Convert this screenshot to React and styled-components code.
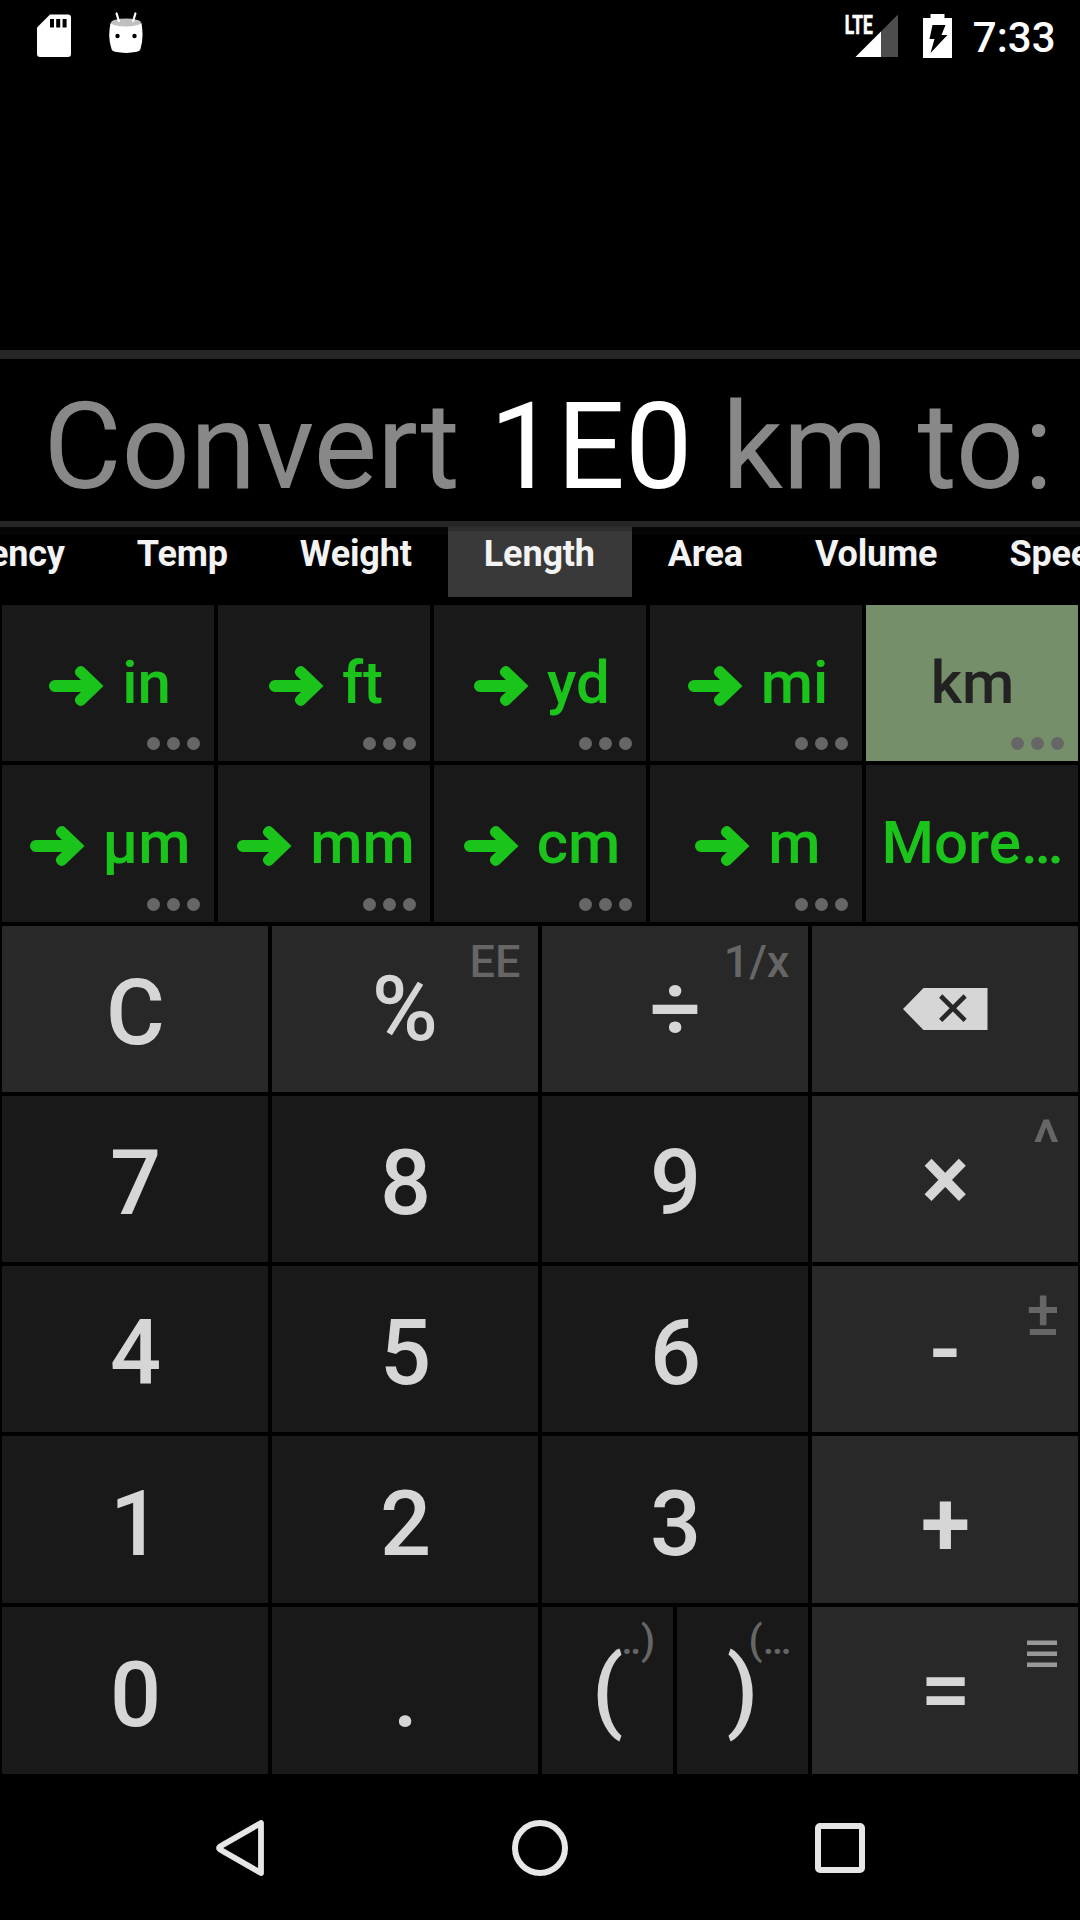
import React from "react";
import styled, { createGlobalStyle } from "styled-components";

const Global = createGlobalStyle`
  html, body { margin: 0; padding: 0; background: #000; }
  * { box-sizing: border-box; }
`;

const Screen = styled.div`
  width: 1080px;
  height: 1920px;
  background: #000;
  display: flex;
  flex-direction: column;
  overflow: hidden;
  font-family: Roboto, "Liberation Sans", sans-serif;
`;

const StatusBar = styled.header`
  height: 72px;
  flex: none;
  display: flex;
  justify-content: space-between;
  padding: 0 24.5px 0 37px;
`;

const StatusGroup = styled.div`
  display: flex;
  align-items: flex-start;
`;

const StatusIcon = styled.svg`
  display: block;
  flex: none;
  margin-right: ${(p) => p.$after || 0}px;
`;

const NetworkType = styled.text`
  font-size: 26px;
  font-weight: 700;
  fill: #fff;
  stroke: #fff;
  stroke-width: 0.7px;
`;

const Clock = styled.span`
  color: #fff;
  font-size: 42px;
  font-weight: 500;
  line-height: 75px;
`;

const History = styled.div`
  height: 278px;
  flex: none;
`;

const Display = styled.div`
  height: 177px;
  flex: none;
  border-top: 9px solid #262626;
  border-bottom: 6px solid #262626;
  padding: 18px 27px 0 0;
  text-align: right;
  white-space: pre;
  font-size: 120px;
  letter-spacing: -0.07px;
  line-height: 141px;
  color: #888;
`;

const Value = styled.span`
  color: #fff;
`;

const Tabs = styled.nav`
  height: 76px;
  flex: none;
  display: flex;
  justify-content: center;
  align-items: flex-start;
  padding-right: 50px;
  background: linear-gradient(#050505 8px, #000 8px);
`;

const Tab = styled.div`
  flex: none;
  height: 70px;
  min-width: ${(p) => (p.$active ? 184 : 0)}px;
  padding: 0 36px;
  font-size: 36px;
  line-height: 54px;
  font-weight: 700;
  letter-spacing: -0.15px;
  color: #f3f3f3;
  background: ${(p) => (p.$active ? "linear-gradient(#2f2f2f 4px, #393939 4px)" : "none")};
`;

const Row = styled.div`
  flex: none;
  height: ${(p) => p.$h}px;
  display: grid;
  grid-template-columns: repeat(${(p) => p.$cols}, 1fr);
`;

const Split = styled.div`
  display: grid;
  grid-template-columns: 1fr 1fr;
`;

const Cell = styled.div`
  position: relative;
  margin: 2px;
  display: flex;
  align-items: center;
  justify-content: center;
  white-space: pre;
  font-weight: 500;
`;

const UnitCell = styled(Cell)`
  padding: 0 0 ${(p) => p.$lift}px ${(p) => (p.$shift ? 4 : 1)}px;
  background: ${(p) => (p.$selected ? "#758f6b" : "#191919")};
  color: ${(p) => (p.$selected ? "#222" : "#1bc41b")};
  font-size: 60px;
  line-height: 70px;
`;

const UnitName = styled.span`
  margin-left: ${(p) => (p.$gap ? 18 : 0)}px;
`;

const Arrow = styled.svg`
  display: block;
  margin-top: 6px;
`;

const Dots = styled.div`
  position: absolute;
  right: 14px;
  bottom: 11px;
  display: flex;
  gap: 7px;
`;

const Dot = styled.i`
  width: 13px;
  height: 13px;
  border-radius: 50%;
  background: #666;
`;

const Key = styled(Cell)`
  background: ${(p) => (p.$op ? "#282828" : "#191919")};
  color: #d6d6d6;
  font-size: 90px;
  line-height: 106px;
`;

const KeyLabel = styled.span`
  position: relative;
  padding: ${(p) => (p.$drop === undefined ? 1 : p.$drop)}px 0 0 ${(p) => (p.$flush ? 0 : 1)}px;
  font-weight: ${(p) => p.$weight || 500};
`;

const Hint = styled.span`
  position: absolute;
  right: ${(p) => p.$right}px;
  top: ${(p) => p.$top || 9}px;
  font-size: ${(p) => p.$size || 45}px;
  line-height: 1.2;
  color: #666;
`;

const MenuHint = styled.svg`
  position: absolute;
  right: 21px;
  top: 33px;
`;

const NavBar = styled.footer`
  height: 144px;
  flex: none;
  display: flex;
  justify-content: center;
  align-items: center;
`;

const NavButton = styled.div`
  width: 300px;
  display: flex;
  justify-content: center;
`;

const tabs = ["Currency", "Temp", "Weight", "Length", "Area", "Volume", "Speed"];
const units = [
  ["in", "ft", "yd", "mi", "km"],
  ["µm", "mm", "cm", "m", "More…"],
];

function Unit({ name, lift }) {
  const selected = name === "km";
  const more = name === "More…";
  const arrow = !selected && !more;
  return (
    <UnitCell $selected={selected} $shift={arrow} $lift={lift}>
      {arrow && (
        <Arrow width="55" height="40" viewBox="0 0 55 40" fill="#1bc41b">
          <path d="M6 14H32L27.300 9.500A5.700 5.700 0 0 1 35.300 1.500L54.500 20L35.300 38.500A5.700 5.700 0 0 1 27.300 30.500L32 26H6A6 6 0 0 1 6 14Z" />
        </Arrow>
      )}
      <UnitName $gap={arrow}>{name}</UnitName>
      {!more && (
        <Dots>
          <Dot />
          <Dot />
          <Dot />
        </Dots>
      )}
    </UnitCell>
  );
}

function Digit({ children }) {
  return (
    <Key>
      <KeyLabel $drop={10}>{children}</KeyLabel>
    </Key>
  );
}

export default function App() {
  return (
    <Screen>
      <Global />
      <StatusBar>
        <StatusGroup>
          <StatusIcon $after={36} width="35" height="60" viewBox="0 0 35 60">
            <path fill="#fff" d="M13 14.500H31Q34 14.500 34 17.500V54Q34 57 31 57H3Q0 57 0 54V27.500Z" />
            <path fill="#000" d="M13 19h4v8.500h-4zM19.200 19h4v8.500h-4zM25.600 19h4v8.500h-4z" />
          </StatusIcon>
          <StatusIcon width="36" height="60" viewBox="0 0 36 60">
            <path fill="#fff" d="M2.500 23Q18 29 33.500 23Q36 38 32.500 49Q32 51 29 51.800Q18 54 7 51.800Q4 51 3.500 49Q-0.500 38 2.500 23Z" />
            <ellipse cx="18" cy="22.500" rx="15" ry="4" fill="#c0c0c0" />
            <path d="M8.600 13.500L10.800 21M27.400 13.500L25.200 21" stroke="#fff" strokeWidth="2.200" strokeLinecap="round" />
            <circle cx="9.500" cy="36" r="2.200" />
            <circle cx="26.500" cy="36" r="2.200" />
          </StatusIcon>
        </StatusGroup>
        <StatusGroup>
          <StatusIcon $after={24} width="54" height="60" viewBox="0 0 54 60">
            <path fill="#4d4d4d" d="M53 14.500V57H10.500Z" />
            <path fill="#fff" d="M36 31.500V57H10.500Z" />
            <NetworkType x="-0.300" y="33.700" textLength="28" lengthAdjust="spacingAndGlyphs">
              LTE
            </NetworkType>
          </StatusIcon>
          <StatusIcon $after={21} width="29" height="60" viewBox="0 0 29 60">
            <path fill="#fff" d="M7.500 14H21.500V18H29V58H0V18H7.500Z" />
            <path fill="#000" d="M9.500 25H22.500L18.500 35H24.500L7.500 53L11.500 39H6.500Z" />
          </StatusIcon>
          <Clock>7:33</Clock>
        </StatusGroup>
      </StatusBar>
      <History />
      <Display>
        Convert <Value>1E0</Value> km to:
      </Display>
      <Tabs>
        {tabs.map((t) => (
          <Tab key={t} $active={t === "Length"}>
            {t}
          </Tab>
        ))}
      </Tabs>
      {units.map((row, i) => (
        <Row key={i} $cols={5} $h={160 + i}>
          {row.map((u) => (
            <Unit key={u} name={u} lift={i} />
          ))}
        </Row>
      ))}
      <Row $cols={4} $h={170}>
        <Key $op>
          <KeyLabel $drop={10}>C</KeyLabel>
        </Key>
        <Key $op>
          <KeyLabel $flush>%</KeyLabel>
          <Hint $right={17.6}>EE</Hint>
        </Key>
        <Key $op>
          <KeyLabel $drop={2}>÷</KeyLabel>
          <Hint $right={18.6}>1/x</Hint>
        </Key>
        <Key $op>
          <svg width="85" height="42" viewBox="0 0 85 42">
            <path fill="#d6d6d6" d="M20.500 0H84.500V42H20.500L0 21Z" />
            <path d="M37.700 8L62.100 32.400M62.100 8L37.700 32.400" stroke="#282828" strokeWidth="4.600" />
          </svg>
        </Key>
      </Row>
      <Row $cols={4} $h={170}>
        <Digit>7</Digit>
        <Digit>8</Digit>
        <Digit>9</Digit>
        <Key $op>
          <KeyLabel $weight={600}>×</KeyLabel>
          <Hint $right={18.2} $size={63}>^</Hint>
        </Key>
      </Row>
      <Row $cols={4} $h={170}>
        <Digit>4</Digit>
        <Digit>5</Digit>
        <Digit>6</Digit>
        <Key $op>
          <KeyLabel $flush>-</KeyLabel>
          <Hint $right={18.2} $top={9.5} $size={63}>±</Hint>
        </Key>
      </Row>
      <Row $cols={4} $h={171}>
        <Digit>1</Digit>
        <Digit>2</Digit>
        <Digit>3</Digit>
        <Key $op>
          <KeyLabel $drop={10} $weight={600}>+</KeyLabel>
        </Key>
      </Row>
      <Row $cols={4} $h={171}>
        <Digit>0</Digit>
        <Digit>.</Digit>
        <Split>
          <Key>
            <Hint $right={17.9} $size={40.5}>…)</Hint>
            <KeyLabel $flush>(</KeyLabel>
          </Key>
          <Key>
            <KeyLabel $flush>)</KeyLabel>
            <Hint $right={16.7} $size={40.5}>(…</Hint>
          </Key>
        </Split>
        <Key $op>
          <KeyLabel>=</KeyLabel>
          <MenuHint width="30" height="28" viewBox="0 0 30 28">
            <path fill="#999" d="M0 .5h30v4.500h-30zM0 11.500h30v4.500h-30zM0 22.500h30v4.500h-30z" />
          </MenuHint>
        </Key>
      </Row>
      <NavBar>
        <NavButton>
          <svg width="48" height="56" viewBox="0 0 48 56" fill="none" stroke="#e6e6e6" strokeWidth="5.800" strokeLinejoin="round">
            <path d="M45 3V53L4 29.500Q2 28 4 26.500Z" />
          </svg>
        </NavButton>
        <NavButton>
          <svg width="56" height="56" viewBox="0 0 56 56" fill="none" stroke="#e6e6e6" strokeWidth="6">
            <circle cx="28" cy="28" r="25" />
          </svg>
        </NavButton>
        <NavButton>
          <svg width="50" height="50" viewBox="0 0 50 50" fill="none" stroke="#e6e6e6" strokeWidth="6">
            <rect x="3" y="3" width="44" height="44" rx="2" />
          </svg>
        </NavButton>
      </NavBar>
    </Screen>
  );
}
